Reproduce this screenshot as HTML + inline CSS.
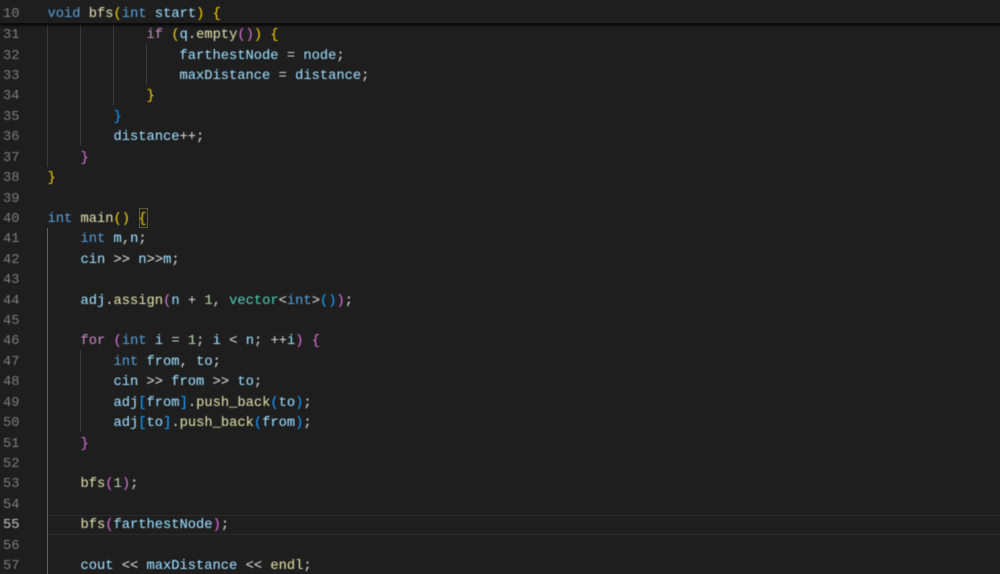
<!DOCTYPE html>
<html><head><meta charset="utf-8">
<style>
html,body{margin:0;padding:0;background:#1e1e1e;width:1000px;height:574px;overflow:hidden}
#r{position:relative;width:1000px;height:574px;overflow:hidden;background:#1e1e1e}
pre{position:absolute;margin:0;font-family:"Liberation Mono","DejaVu Sans Mono",monospace;font-size:13.75px;line-height:20.42px;color:#d4d4d4;-webkit-text-stroke:.08px;filter:blur(.45px)}
.g{position:absolute;width:1px;background:#3a3a3a}
.n{color:#7d7d7d;-webkit-text-stroke:0}
.k{color:#569cd6}.c{color:#c586c0}.f{color:#dcdcaa}.v{color:#9cdcfe}.t{color:#4ec9b0}.d{color:#b5cea8}
.y{color:#f0ca0a}.p{color:#da70d6}.b{color:#179fff}
</style></head><body><div id="r">
<div style="position:absolute;left:48px;top:515px;width:952px;height:18px;border-top:1px solid #2b2b2b;border-bottom:1px solid #2b2b2b"></div>
<div class="g" style="left:47px;top:24px;height:143px"></div>
<div class="g" style="left:80px;top:24px;height:122px"></div>
<div class="g" style="left:113px;top:24px;height:81px"></div>
<div class="g" style="left:146px;top:44px;height:41px"></div>
<div class="g" style="left:47px;top:228px;height:346px;background:#5e5e5e"></div>
<div class="g" style="left:80px;top:350px;height:82px"></div>
<div style="position:absolute;left:139px;top:208px;width:7px;height:18px;border:1px solid #5c5c40"></div>
<pre class="n" style="left:3px;top:26.15px">31
32
33
34
35
36
37
38
39
40
41
42
43
44
45
46
47
48
49
50
51
52
53
54
<span style="color:#c6c6c6">55</span>
56
57</pre>
<pre style="left:47.5px;top:26.15px">            <span class="c">if</span> <span class="y">(</span><span class="v">q</span>.<span class="f">empty</span><span class="p">()</span><span class="y">)</span> <span class="y">{</span>
                <span class="v">farthestNode</span> = <span class="v">node</span>;
                <span class="v">maxDistance</span> = <span class="v">distance</span>;
            <span class="y">}</span>
        <span class="b">}</span>
        <span class="v">distance</span>++;
    <span class="p">}</span>
<span class="y">}</span>

<span class="k">int</span> <span class="f">main</span><span class="y">()</span> <span class="y">{</span>
    <span class="k">int</span> <span class="v">m</span>,<span class="v">n</span>;
    <span class="v">cin</span> &gt;&gt; <span class="v">n</span>&gt;&gt;<span class="v">m</span>;

    <span class="v">adj</span>.<span class="f">assign</span><span class="p">(</span><span class="v">n</span> + <span class="d">1</span>, <span class="t">vector</span>&lt;<span class="k">int</span>&gt;<span class="b">()</span><span class="p">)</span>;

    <span class="c">for</span> <span class="p">(</span><span class="k">int</span> <span class="v">i</span> = <span class="d">1</span>; <span class="v">i</span> &lt; <span class="v">n</span>; ++<span class="v">i</span><span class="p">)</span> <span class="p">{</span>
        <span class="k">int</span> <span class="v">from</span>, <span class="v">to</span>;
        <span class="v">cin</span> &gt;&gt; <span class="v">from</span> &gt;&gt; <span class="v">to</span>;
        <span class="v">adj</span><span class="b">[</span><span class="v">from</span><span class="b">]</span>.<span class="f">push_back</span><span class="b">(</span><span class="v">to</span><span class="b">)</span>;
        <span class="v">adj</span><span class="b">[</span><span class="v">to</span><span class="b">]</span>.<span class="f">push_back</span><span class="b">(</span><span class="v">from</span><span class="b">)</span>;
    <span class="p">}</span>

    <span class="f">bfs</span><span class="p">(</span><span class="d">1</span><span class="p">)</span>;

    <span class="f">bfs</span><span class="p">(</span><span class="v">farthestNode</span><span class="p">)</span>;

    <span class="v">cout</span> &lt;&lt; <span class="v">maxDistance</span> &lt;&lt; <span class="f">endl</span>;</pre>
<div style="position:absolute;left:0;top:0;width:1000px;height:23px;background:#1e1e1e;box-shadow:0 1px 3px #000;border-bottom:1px solid #0c0c0c"></div>
<pre class="n" style="left:3px;top:5px">10</pre>
<pre style="left:47.5px;top:5px"><span class="k">void</span> <span class="f">bfs</span><span class="y">(</span><span class="k">int</span> <span class="v">start</span><span class="y">)</span> <span class="y">{</span></pre>
</div></body></html>
